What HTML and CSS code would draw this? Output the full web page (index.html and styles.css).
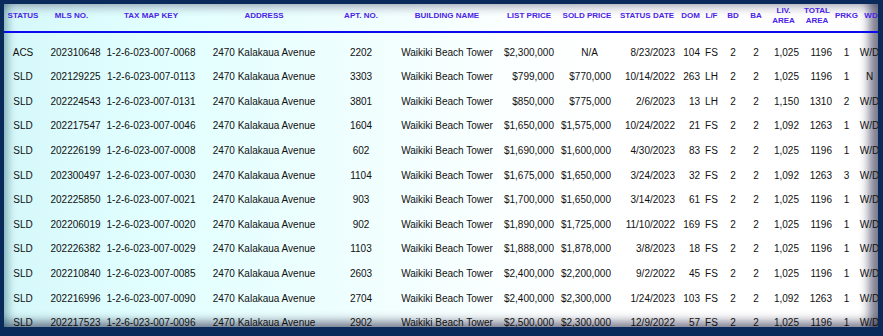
FILE: index.html
```html
<!DOCTYPE html>
<html>
<head>
<meta charset="utf-8">
<link rel="stylesheet" href="styles.css">
</head>
<body>
<div class="frame">
  <div class="panel">
    <table class="sales">
      <colgroup>
        <col class="c-status"><col class="c-mls"><col class="c-tmk"><col class="c-addr"><col class="c-apt"><col class="c-bldg"><col class="c-list"><col class="c-sold"><col class="c-date"><col class="c-dom"><col class="c-lf"><col class="c-bd"><col class="c-ba"><col class="c-liv"><col class="c-total"><col class="c-prkg"><col class="c-wd">
      </colgroup>
      <thead>
        <tr>
          <th>STATUS</th><th>MLS NO.</th><th>TAX MAP KEY</th><th>ADDRESS</th><th>APT. NO.</th><th>BUILDING NAME</th><th>LIST PRICE</th><th>SOLD PRICE</th><th>STATUS DATE</th><th>DOM</th><th>L/F</th><th>BD</th><th>BA</th><th>LIV.<br>AREA</th><th>TOTAL<br>AREA</th><th>PRKG</th><th>WD</th>
        </tr>
      </thead>
      <tbody>
        <tr><td>ACS</td><td>202310648</td><td>1-2-6-023-007-0068</td><td>2470 Kalakaua Avenue</td><td>2202</td><td>Waikiki Beach Tower</td><td>$2,300,000</td><td class="na">N/A</td><td>8/23/2023</td><td>104</td><td>FS</td><td>2</td><td>2</td><td>1,025</td><td>1196</td><td>1</td><td>W/D</td></tr>
        <tr><td>SLD</td><td>202129225</td><td>1-2-6-023-007-0113</td><td>2470 Kalakaua Avenue</td><td>3303</td><td>Waikiki Beach Tower</td><td>$799,000</td><td>$770,000</td><td>10/14/2022</td><td>263</td><td>LH</td><td>2</td><td>2</td><td>1,025</td><td>1196</td><td>1</td><td>N</td></tr>
        <tr><td>SLD</td><td>202224543</td><td>1-2-6-023-007-0131</td><td>2470 Kalakaua Avenue</td><td>3801</td><td>Waikiki Beach Tower</td><td>$850,000</td><td>$775,000</td><td>2/6/2023</td><td>13</td><td>LH</td><td>2</td><td>2</td><td>1,150</td><td>1310</td><td>2</td><td>W/D</td></tr>
        <tr><td>SLD</td><td>202217547</td><td>1-2-6-023-007-0046</td><td>2470 Kalakaua Avenue</td><td>1604</td><td>Waikiki Beach Tower</td><td>$1,650,000</td><td>$1,575,000</td><td>10/24/2022</td><td>21</td><td>FS</td><td>2</td><td>2</td><td>1,092</td><td>1263</td><td>1</td><td>W/D</td></tr>
        <tr><td>SLD</td><td>202226199</td><td>1-2-6-023-007-0008</td><td>2470 Kalakaua Avenue</td><td>602</td><td>Waikiki Beach Tower</td><td>$1,690,000</td><td>$1,600,000</td><td>4/30/2023</td><td>83</td><td>FS</td><td>2</td><td>2</td><td>1,025</td><td>1196</td><td>1</td><td>W/D</td></tr>
        <tr><td>SLD</td><td>202300497</td><td>1-2-6-023-007-0030</td><td>2470 Kalakaua Avenue</td><td>1104</td><td>Waikiki Beach Tower</td><td>$1,675,000</td><td>$1,650,000</td><td>3/24/2023</td><td>32</td><td>FS</td><td>2</td><td>2</td><td>1,092</td><td>1263</td><td>3</td><td>W/D</td></tr>
        <tr><td>SLD</td><td>202225850</td><td>1-2-6-023-007-0021</td><td>2470 Kalakaua Avenue</td><td>903</td><td>Waikiki Beach Tower</td><td>$1,700,000</td><td>$1,650,000</td><td>3/14/2023</td><td>61</td><td>FS</td><td>2</td><td>2</td><td>1,025</td><td>1196</td><td>1</td><td>W/D</td></tr>
        <tr><td>SLD</td><td>202206019</td><td>1-2-6-023-007-0020</td><td>2470 Kalakaua Avenue</td><td>902</td><td>Waikiki Beach Tower</td><td>$1,890,000</td><td>$1,725,000</td><td>11/10/2022</td><td>169</td><td>FS</td><td>2</td><td>2</td><td>1,025</td><td>1196</td><td>1</td><td>W/D</td></tr>
        <tr><td>SLD</td><td>202226382</td><td>1-2-6-023-007-0029</td><td>2470 Kalakaua Avenue</td><td>1103</td><td>Waikiki Beach Tower</td><td>$1,888,000</td><td>$1,878,000</td><td>3/8/2023</td><td>18</td><td>FS</td><td>2</td><td>2</td><td>1,025</td><td>1196</td><td>1</td><td>W/D</td></tr>
        <tr><td>SLD</td><td>202210840</td><td>1-2-6-023-007-0085</td><td>2470 Kalakaua Avenue</td><td>2603</td><td>Waikiki Beach Tower</td><td>$2,400,000</td><td>$2,200,000</td><td>9/2/2022</td><td>45</td><td>FS</td><td>2</td><td>2</td><td>1,025</td><td>1196</td><td>1</td><td>W/D</td></tr>
        <tr><td>SLD</td><td>202216996</td><td>1-2-6-023-007-0090</td><td>2470 Kalakaua Avenue</td><td>2704</td><td>Waikiki Beach Tower</td><td>$2,400,000</td><td>$2,300,000</td><td>1/24/2023</td><td>103</td><td>FS</td><td>2</td><td>2</td><td>1,092</td><td>1263</td><td>1</td><td>W/D</td></tr>
        <tr><td>SLD</td><td>202217523</td><td>1-2-6-023-007-0096</td><td>2470 Kalakaua Avenue</td><td>2902</td><td>Waikiki Beach Tower</td><td>$2,500,000</td><td>$2,300,000</td><td>12/9/2022</td><td>57</td><td>FS</td><td>2</td><td>2</td><td>1,025</td><td>1196</td><td>1</td><td>W/D</td></tr>
      </tbody>
    </table>
  </div>
</div>
</body>
</html>
```
FILE: styles.css
```css
html, body {
  margin: 0;
  padding: 0;
  background: #0b2a5c;
}

.frame {
  width: 883px;
  height: 336px;
  box-sizing: border-box;
  padding: 4px 5px 9px 4px;
}

.panel {
  height: 323px;
  overflow: hidden;
  background: linear-gradient(to right, #d6f8fa 0, #e2ffff 18%, #effefe 40%, #fbffff 58%, #ffffff 70%);
  box-shadow:
    inset 11px 0 9px -7px rgba(0, 70, 90, 0.38),
    inset -16px 0 10px -7px rgba(20, 20, 55, 0.55),
    inset 0 11px 9px -7px rgba(40, 40, 80, 0.32),
    inset 0 -13px 10px -7px rgba(20, 20, 55, 0.5);
}

.sales {
  table-layout: fixed;
  width: 879px;
  border-collapse: separate;
  border-spacing: 0;
  font-family: "Liberation Sans", Arial, sans-serif;
}

.c-status { width: 38px; }
.c-mls { width: 59px; }
.c-tmk { width: 100px; }
.c-addr { width: 126px; }
.c-apt { width: 68px; }
.c-bldg { width: 104px; }
.c-list { width: 60px; }
.c-sold { width: 56px; }
.c-date { width: 64px; }
.c-dom { width: 23px; }
.c-lf { width: 19px; }
.c-bd { width: 24px; }
.c-ba { width: 22px; }
.c-liv { width: 33px; }
.c-total { width: 34px; }
.c-prkg { width: 25px; }
.c-wd { width: 24px; }

.sales th {
  font-size: 8px;
  font-weight: bold;
  line-height: 10px;
  color: #4a24e8;
  text-align: center;
  vertical-align: middle;
  white-space: nowrap;
  height: 20px;
  padding: 1.6px 0 5.4px;
  border-bottom: 2px solid #0a0aee;
}

.sales td {
  font-size: 10px;
  line-height: 24.6px;
  height: 24.6px;
  color: #111;
  text-align: center;
  white-space: nowrap;
  padding: 0;
}

.sales tbody tr:first-child td {
  padding-top: 7.6px;
}

.sales td:nth-child(2) { padding-left: 8px; }
.sales td:nth-child(7) { text-align: right; padding-right: 5px; }
.sales td:nth-child(8) { text-align: right; padding-right: 4px; }
.sales td:nth-child(9) { text-align: right; padding-right: 4px; }
.sales td:nth-child(10) { text-align: right; padding-right: 2px; }
.sales td:nth-child(14) { text-align: right; padding-right: 1px; }
.sales td:nth-child(15) { text-align: right; padding-right: 2px; }
.sales td:nth-child(17) { padding-right: 3px; }
.sales td.na { text-align: center; padding-left: 5px; padding-right: 0; }
```
